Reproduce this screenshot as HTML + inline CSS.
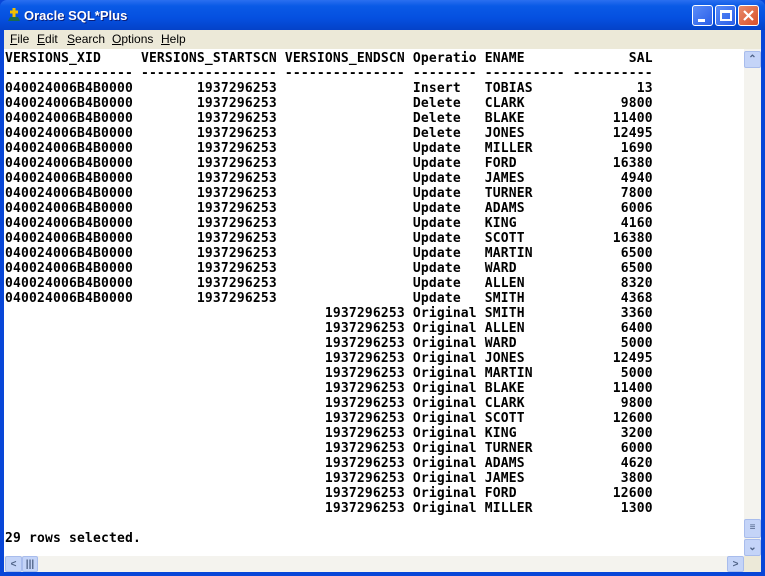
<!DOCTYPE html>
<html><head><style>
*{margin:0;padding:0;box-sizing:border-box}
body{width:765px;height:576px;overflow:hidden;background:#0846d8;position:relative;font-family:"Liberation Sans",sans-serif}
#title{position:absolute;left:0;top:0;width:765px;height:30px;background:linear-gradient(#2b6ff0,#0a5ae6 20%,#0550e0 60%,#0442c8);border-radius:7px 7px 0 0}
#title .t{position:absolute;left:24px;top:8px;color:#fff;font-weight:bold;font-size:13px;text-shadow:1px 1px #0a1e7a}
.btn{position:absolute;top:5px;width:21px;height:21px;border:1px solid #fff;border-radius:3px;background:linear-gradient(135deg,#5a8cf8,#2a5ee8)}
#menu{position:absolute;left:4px;top:30px;width:757px;height:19px;background:#ece9d8;font-size:12px}
#menu span{position:absolute;top:2px}
#content{position:absolute;left:4px;top:49px;width:740px;height:507px;background:#fff;overflow:hidden}
pre{position:absolute;left:1px;top:2px;font-family:"DejaVu Sans Mono","Liberation Mono",monospace;font-weight:bold;font-size:13px;letter-spacing:0.17px;line-height:15px;color:#000}
#vs{position:absolute;left:744px;top:49px;width:17px;height:507px;background:#f4f3ee}
#hs{position:absolute;left:4px;top:556px;width:740px;height:16px;background:#f4f3ee}
.sb{position:absolute;width:17px;height:17px;background:#c4d4f8;border:1px solid #a8bcec;border-radius:2px;color:#4d6185;font-size:10px;text-align:center;line-height:15px;font-weight:bold}
#corner{position:absolute;left:744px;top:556px;width:17px;height:16px;background:#ece9d8}
</style></head><body>
<div id="title">
<svg style="position:absolute;left:6px;top:7px" width="16" height="16"><path d="M2 14h12l-2-4H4z" fill="#1a6a50"/><path d="M8 1v9M4 5h8" stroke="#f0c000" stroke-width="3"/></svg>
<div class="t">Oracle SQL*Plus</div>
<div class="btn" style="left:692px"><div style="position:absolute;left:5px;top:13px;width:7px;height:3px;background:#fff"></div></div>
<div class="btn" style="left:715px"><div style="position:absolute;left:4px;top:4px;width:12px;height:11px;border:2px solid #fff;border-top-width:3px"></div></div>
<div class="btn" style="left:738px;background:linear-gradient(135deg,#e88a6a,#d8502a)"><svg width="19" height="19"><path d="M5 5l9 9M14 5l-9 9" stroke="#fff" stroke-width="2.2"/></svg></div>
</div>
<div id="menu"><span style="left:6px"><u>F</u>ile</span><span style="left:33px"><u>E</u>dit</span><span style="left:63px"><u>S</u>earch</span><span style="left:108px"><u>O</u>ptions</span><span style="left:157px"><u>H</u>elp</span></div>
<div id="content"><pre>VERSIONS_XID     VERSIONS_STARTSCN VERSIONS_ENDSCN Operatio ENAME             SAL
---------------- ----------------- --------------- -------- ---------- ----------
040024006B4B0000        1937296253                 Insert   TOBIAS             13
040024006B4B0000        1937296253                 Delete   CLARK            9800
040024006B4B0000        1937296253                 Delete   BLAKE           11400
040024006B4B0000        1937296253                 Delete   JONES           12495
040024006B4B0000        1937296253                 Update   MILLER           1690
040024006B4B0000        1937296253                 Update   FORD            16380
040024006B4B0000        1937296253                 Update   JAMES            4940
040024006B4B0000        1937296253                 Update   TURNER           7800
040024006B4B0000        1937296253                 Update   ADAMS            6006
040024006B4B0000        1937296253                 Update   KING             4160
040024006B4B0000        1937296253                 Update   SCOTT           16380
040024006B4B0000        1937296253                 Update   MARTIN           6500
040024006B4B0000        1937296253                 Update   WARD             6500
040024006B4B0000        1937296253                 Update   ALLEN            8320
040024006B4B0000        1937296253                 Update   SMITH            4368
                                        1937296253 Original SMITH            3360
                                        1937296253 Original ALLEN            6400
                                        1937296253 Original WARD             5000
                                        1937296253 Original JONES           12495
                                        1937296253 Original MARTIN           5000
                                        1937296253 Original BLAKE           11400
                                        1937296253 Original CLARK            9800
                                        1937296253 Original SCOTT           12600
                                        1937296253 Original KING             3200
                                        1937296253 Original TURNER           6000
                                        1937296253 Original ADAMS            4620
                                        1937296253 Original JAMES            3800
                                        1937296253 Original FORD            12600
                                        1937296253 Original MILLER           1300

29 rows selected.</pre></div>
<div id="vs">
<div class="sb" style="left:0;top:2px">&#8963;</div>
<div class="sb" style="left:0;top:470px;height:19px">&#8801;</div>
<div class="sb" style="left:0;top:490px">&#8964;</div>
</div>
<div id="hs">
<div class="sb" style="left:1px;top:0;height:16px">&lt;</div>
<div class="sb" style="left:18px;top:0;height:16px;width:16px">|||</div>
<div class="sb" style="left:723px;top:0;height:16px">&gt;</div>
</div>
<div id="corner"></div>
</body></html>
